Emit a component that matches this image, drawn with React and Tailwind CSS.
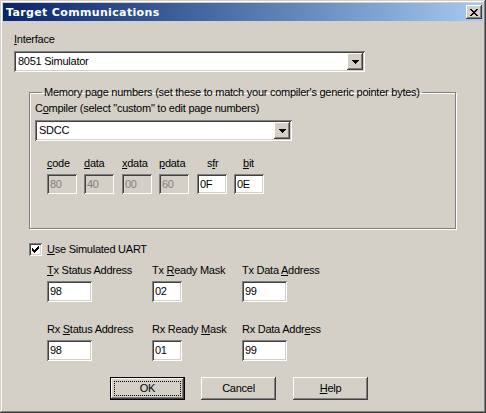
import React from "react";

const sunken =
  "shadow-[inset_1px_1px_#808080,inset_-1px_-1px_#ffffff,inset_2px_2px_#404040,inset_-2px_-2px_#d4d0c8]";
const raised =
  "shadow-[inset_-1px_-1px_#404040,inset_1px_1px_#ffffff,inset_-2px_-2px_#808080,inset_2px_2px_#d4d0c8]";

function Key({ children }) {
  return <span className="underline decoration-1 underline-offset-[1px]">{children}</span>;
}

function Edit({ value, className, disabled }) {
  return (
    <div
      className={`flex items-center pl-[3px] leading-[13px] ${sunken} ${
        disabled ? "bg-[#d4d0c8] text-[#808080]" : "bg-white text-black"
      } ${className}`}
    >
      {value}
    </div>
  );
}

function Combo({ value, className }) {
  return (
    <div className={`flex items-center justify-between bg-white p-[2px] ${sunken} ${className}`}>
      <span className="pl-[2px] leading-[13px]">{value}</span>
      <div className={`flex h-[17px] w-[16px] items-center justify-center bg-[#d4d0c8] ${raised}`}>
        <svg width="7" height="4" viewBox="0 0 7 4">
          <path d="M0 0h7v1H0zM1 1h5v1H1zM2 2h3v1H2zM3 3h1v1H3z" fill="#000" />
        </svg>
      </div>
    </div>
  );
}

function Button({ children, primary, className = "" }) {
  if (primary) {
    return (
      <div className={`h-[23px] w-[75px] border border-black ${className}`}>
        <div className={`flex h-full w-full items-center justify-center p-[3px] ${raised}`}>
          <div className="flex h-full w-full items-center justify-center border border-dotted border-black leading-[13px]">
            {children}
          </div>
        </div>
      </div>
    );
  }
  return (
    <div className={`flex h-[23px] w-[75px] items-center justify-center bg-[#d4d0c8] leading-[13px] ${raised} ${className}`}>
      {children}
    </div>
  );
}

function PageField({ label, value, disabled, className, labelClass = "" }) {
  return (
    <div className={`flex w-[30px] flex-col ${className}`}>
      <div className={`h-[13px] leading-[13px] ${labelClass}`}>{label}</div>
      <Edit value={value} disabled={disabled} className="mt-[4px] h-[20px] w-[30px]" />
    </div>
  );
}

function UartField({ label, value, className, boxClass }) {
  return (
    <div className={`flex flex-col ${className}`}>
      <div className="h-[13px] whitespace-nowrap leading-[13px]">{label}</div>
      <Edit value={value} className={`mt-[4px] h-[21px] ${boxClass}`} />
    </div>
  );
}

export default function App() {
  return (
    <div className="h-[413px] w-[486px] bg-[#d4d0c8] p-[3px] font-['Liberation_Sans',Arial,sans-serif] text-[11px] tracking-[-0.25px] text-black shadow-[inset_-1px_-1px_#404040,inset_1px_1px_#d4d0c8,inset_-2px_-2px_#808080,inset_2px_2px_#ffffff]">
      <div className="flex h-[18px] items-center justify-between bg-gradient-to-r from-[#0a246a] to-[#a6caf0] pl-[3px] pr-[1px]">
        <span className="font-['DejaVu_Sans',sans-serif] text-[11px] font-bold leading-[13px] tracking-[0.35px] text-white">
          Target Communications
        </span>
        <div className={`flex h-[14px] w-[16px] items-center justify-center bg-[#d4d0c8] ${raised}`}>
          <svg width="8" height="7" viewBox="0 0 8 7">
            <path
              d="M0 0h2v1H0zM6 0h2v1H6zM1 1h2v1H1zM5 1h2v1H5zM2 2h4v1H2zM3 3h2v1H3zM2 4h4v1H2zM1 5h2v1H1zM5 5h2v1H5zM0 6h2v1H0zM6 6h2v1H6z"
              fill="#000"
            />
          </svg>
        </div>
      </div>

      <div className="flex flex-col pl-[11px]">
        <div className="mt-[12px] h-[13px] leading-[13px]">
          <Key>I</Key>nterface
        </div>
        <Combo value="8051 Simulator" className="mt-[5px] h-[21px] w-[351px]" />

        <fieldset className="ml-[15px] mt-[14px] h-[143px] w-[427px] border border-[#808080] pl-[5px] pt-[3px] shadow-[1px_1px_#ffffff,inset_1px_1px_#ffffff]">
          <legend className="ml-[7px] px-[2px] leading-[13px]">
            Memory page numbers (set these to match your compiler's generic pointer bytes)
          </legend>
          <div className="h-[13px] leading-[13px]">
            C<Key>o</Key>mpiler (select "custom" to edit page numbers)
          </div>
          <Combo value="SDCC" className="mt-[5px] h-[21px] w-[257px]" />
          <div className="mt-[16px] flex">
            <PageField className="ml-[12px]" label={<><Key>c</Key>ode</>} value="80" disabled />
            <PageField className="ml-[7px]" label={<><Key>d</Key>ata</>} value="40" disabled />
            <PageField className="ml-[8px]" label={<><Key>x</Key>data</>} value="00" disabled />
            <PageField className="ml-[7px]" label={<><Key>p</Key>data</>} value="60" disabled />
            <PageField className="ml-[8px]" labelClass="pl-[10px]" label={<>s<Key>f</Key>r</>} value="0F" />
            <PageField className="ml-[7px]" labelClass="pl-[9px]" label={<><Key>b</Key>it</>} value="0E" />
          </div>
        </fieldset>

        <div className="ml-[15px] mt-[14px] flex items-center">
          <div className={`flex h-[13px] w-[13px] items-center justify-center bg-white ${sunken}`}>
            <svg width="7" height="7" viewBox="0 0 7 7">
              <path d="M6 0h1v3H6zM5 1h1v3H5zM4 2h1v3H4zM3 3h1v3H3zM2 4h1v3H2zM1 3h1v3H1zM0 2h1v3H0z" fill="#000" />
            </svg>
          </div>
          <span className="ml-[5px] leading-[13px]">
            <Key>U</Key>se Simulated UART
          </span>
        </div>

        <div className="ml-[33px] mt-[8px] flex">
          <UartField className="w-[105px]" boxClass="w-[45px]" value="98" label={<><Key>T</Key>x Status Address</>} />
          <UartField className="w-[90px]" boxClass="w-[30px]" value="02" label={<>Tx <Key>R</Key>eady Mask</>} />
          <UartField boxClass="w-[45px]" value="99" label={<>Tx Data <Key>A</Key>ddress</>} />
        </div>
        <div className="ml-[33px] mt-[21px] flex">
          <UartField className="w-[105px]" boxClass="w-[45px]" value="98" label={<>Rx <Key>S</Key>tatus Address</>} />
          <UartField className="w-[90px]" boxClass="w-[30px]" value="01" label={<>Rx Ready <Key>M</Key>ask</>} />
          <UartField boxClass="w-[45px]" value="99" label={<>Rx Data Addr<Key>e</Key>ss</>} />
        </div>

        <div className="ml-[96px] mt-[16px] flex">
          <Button primary>OK</Button>
          <Button className="ml-[16px]">Cancel</Button>
          <Button className="ml-[17px]">
            <span>
              <Key>H</Key>elp
            </span>
          </Button>
        </div>
      </div>
    </div>
  );
}
